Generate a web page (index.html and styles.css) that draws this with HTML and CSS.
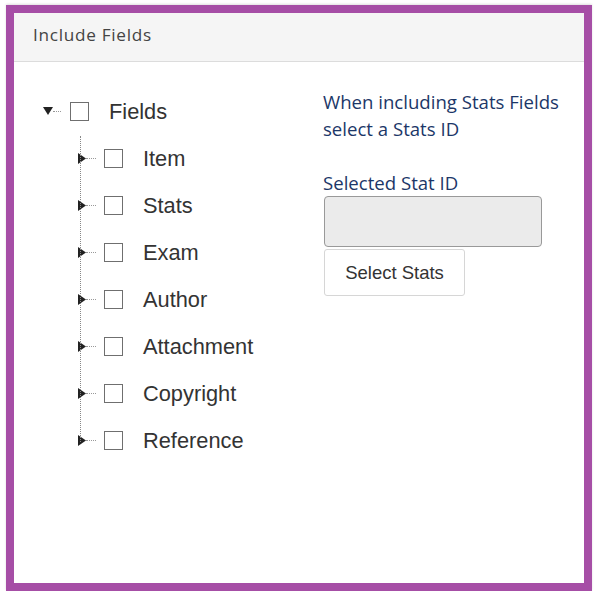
FILE: index.html
```html
<!DOCTYPE html>
<html>
<head>
<meta charset="utf-8">
<link rel="stylesheet" href="styles.css">
</head>
<body>
<div class="frame">
  <div class="panel">
    <div class="panel-head">Include Fields</div>
    <div class="panel-body">
      <div class="tree-col">
        <ul class="tree root">
          <li>
            <div class="row">
              <span class="toggle"><svg width="10" height="9" viewBox="0 0 10 9"><path d="M0 0 L10 0 L5 8 Z" fill="#222"/></svg><span class="conn"></span></span>
              <span class="box"></span>
              <span class="label">Fields</span>
            </div>
            <ul class="tree children">
              <li><div class="row"><span class="toggle"><svg width="8" height="11" viewBox="0 0 8 11"><path d="M0 0 L8 5.5 L0 11 Z" fill="#222"/></svg><span class="conn"></span></span><span class="box"></span><span class="label">Item</span></div></li>
              <li><div class="row"><span class="toggle"><svg width="8" height="11" viewBox="0 0 8 11"><path d="M0 0 L8 5.5 L0 11 Z" fill="#222"/></svg><span class="conn"></span></span><span class="box"></span><span class="label">Stats</span></div></li>
              <li><div class="row"><span class="toggle"><svg width="8" height="11" viewBox="0 0 8 11"><path d="M0 0 L8 5.5 L0 11 Z" fill="#222"/></svg><span class="conn"></span></span><span class="box"></span><span class="label">Exam</span></div></li>
              <li><div class="row"><span class="toggle"><svg width="8" height="11" viewBox="0 0 8 11"><path d="M0 0 L8 5.5 L0 11 Z" fill="#222"/></svg><span class="conn"></span></span><span class="box"></span><span class="label">Author</span></div></li>
              <li><div class="row"><span class="toggle"><svg width="8" height="11" viewBox="0 0 8 11"><path d="M0 0 L8 5.5 L0 11 Z" fill="#222"/></svg><span class="conn"></span></span><span class="box"></span><span class="label">Attachment</span></div></li>
              <li><div class="row"><span class="toggle"><svg width="8" height="11" viewBox="0 0 8 11"><path d="M0 0 L8 5.5 L0 11 Z" fill="#222"/></svg><span class="conn"></span></span><span class="box"></span><span class="label">Copyright</span></div></li>
              <li class="last"><div class="row"><span class="toggle"><svg width="8" height="11" viewBox="0 0 8 11"><path d="M0 0 L8 5.5 L0 11 Z" fill="#222"/></svg><span class="conn"></span></span><span class="box"></span><span class="label">Reference</span></div></li>
            </ul>
          </li>
        </ul>
      </div>
      <div class="side-col">
        <p class="hint">When including Stats Fields select a Stats ID</p>
        <div class="field-label">Selected Stat ID</div>
        <div class="stat-input"></div>
        <button class="stat-btn">Select Stats</button>
      </div>
    </div>
  </div>
</div>
</body>
</html>
```

FILE: styles.css
```css
html, body {
  margin: 0;
  padding: 0;
  background: #ffffff;
}
body {
  padding: 5px 0 0 6px;
}
.frame {
  width: 570px;
  height: 570px;
  border: 8px solid #a64ea6;
  box-shadow: 0 -1px 2px rgba(0,0,0,0.12);
}
.panel {
  height: 100%;
  background: #ffffff;
  display: flex;
  flex-direction: column;
}
.panel-head {
  background: #f5f5f5;
  border-bottom: 1px solid #dcdcdc;
  box-sizing: border-box;
  height: 49px;
  display: flex;
  align-items: center;
  padding: 0 0 5px 19px;
  font-family: "Open Sans", sans-serif;
  font-size: 17.2px;
  letter-spacing: 0.7px;
  color: #444;
}
.panel-body {
  display: flex;
  flex: 1;
}
.tree-col {
  width: 280px;
  padding: 26px 0 0 29px;
}
.tree {
  list-style: none;
  margin: 0;
  padding: 0;
}
.row {
  height: 47px;
  display: flex;
  align-items: center;
}
.toggle {
  display: flex;
  align-items: center;
  width: 27px;
  flex: none;
}
.conn {
  width: 8px;
  border-top: 1px dotted #999;
}
.box {
  width: 17px;
  height: 17px;
  border: 1px solid #6f6f6f;
  flex: none;
  box-sizing: content-box;
}
.label {
  margin-left: 20px;
  font-family: "Liberation Sans", Arial, sans-serif;
  font-size: 21.8px;
  color: #333;
}
.children {
  margin-left: 35px;
  position: relative;
}
.children::before {
  content: "";
  position: absolute;
  left: 2px;
  top: 1px;
  height: 306px;
  border-left: 1px dotted #888;
}
.children .toggle {
  width: 26px;
}
.children .conn {
  width: 10px;
}
.side-col {
  padding: 26px 0 0 0;
  font-family: "Open Sans", sans-serif;
  color: #1c3768;
}
.hint {
  margin: 0;
  width: 255px;
  font-size: 18.6px;
  line-height: 27px;
}
.field-label {
  margin-top: 27px;
  font-size: 18.6px;
  line-height: 27px;
}
.stat-input {
  margin-top: 0;
  margin-left: 1px;
  width: 216px;
  height: 49px;
  background: #ebebeb;
  border: 1px solid #999;
  border-radius: 4px;
}
.stat-btn {
  display: block;
  margin-top: 2px;
  margin-left: 1px;
  width: 141px;
  height: 47px;
  background: #fff;
  border: 1px solid #d6d6d6;
  border-radius: 3px;
  font-family: "Liberation Sans", Arial, sans-serif;
  font-size: 18.5px;
  color: #333;
  padding: 0;
}
```
